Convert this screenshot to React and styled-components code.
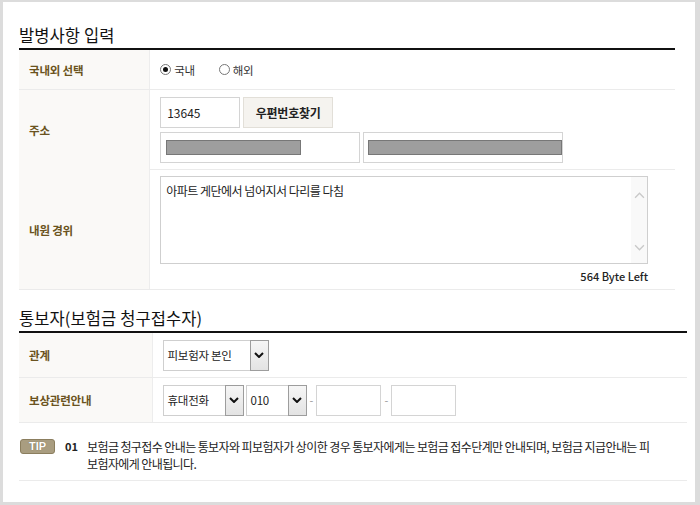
import React from "react";
import styled, { createGlobalStyle } from "styled-components";

const GlobalStyle = createGlobalStyle`
  html, body {
    margin: 0;
    padding: 0;
    background: #dcdcdc;
  }
  body {
    font-family: "Noto Sans CJK KR", "Noto Sans", sans-serif;
    color: #222;
  }
`;

const Frame = styled.div`
  width: 692px;
  height: 500px;
  margin: 2px 0 0 3px;
  padding-left: 16px;
  box-sizing: border-box;
  background: #fff;
  overflow: hidden;
`;

const Section = styled.section`
  width: ${(p) => p.$width}px;
`;

const Title = styled.h2`
  margin: 0;
  padding: ${(p) => p.$top}px 0 2px;
  font-size: 16.5px;
  line-height: 22px;
  font-weight: 400;
  letter-spacing: 0.1px;
  color: #111;
  border-bottom: 2px solid #111;
`;

const Row = styled.div`
  display: grid;
  grid-template-columns: 20% 1fr;
  height: ${(p) => p.$h}px;
  box-sizing: border-box;
  border-bottom: 1px solid #ebebeb;
`;

const Label = styled.div`
  display: flex;
  align-items: center;
  padding-left: 10px;
  background: #faf9f7;
  border-right: 1px solid #ededed;
  font-size: 11.5px;
  font-weight: 700;
  letter-spacing: -0.2px;
  color: #6a5320;
`;

const Cell = styled.div`
  display: flex;
  flex-direction: ${(p) => (p.$column ? "column" : "row")};
  align-items: ${(p) => (p.$column ? "stretch" : "center")};
  gap: ${(p) => p.$gap || 0}px;
  padding: ${(p) => p.$pad || "0 10px"};
`;

const Line = styled.div`
  display: flex;
  align-items: center;
  gap: ${(p) => p.$gap || 0}px;
  margin-left: ${(p) => p.$indent || 0}px;
`;

const RadioItem = styled.label`
  display: flex;
  align-items: center;
  gap: 3px;
  margin-right: 24px;
  font-size: 11.5px;
  letter-spacing: -0.3px;
  color: #333;
`;

const RadioDot = styled.span`
  width: 11px;
  height: 11px;
  box-sizing: border-box;
  border: 1px solid #777;
  border-radius: 50%;
  display: flex;
  align-items: center;
  justify-content: center;
  &::after {
    content: "";
    width: 5px;
    height: 5px;
    border-radius: 50%;
    background: ${(p) => (p.$on ? "#111" : "transparent")};
  }
`;

const TextInput = styled.input`
  width: ${(p) => p.$w}px;
  height: 31px;
  box-sizing: border-box;
  border: 1px solid #d4d4d4;
  padding: 0 6px;
  font-family: inherit;
  font-size: 12px;
  color: #222;
  outline: none;
`;

const SearchButton = styled.button`
  width: 90px;
  height: 31px;
  margin-left: 3px;
  border: 1px solid #e2dfd8;
  background: #f5f3ef;
  font-family: inherit;
  font-size: 12px;
  font-weight: 700;
  color: #222;
  letter-spacing: -0.2px;
`;

const AddressField = styled.div`
  width: ${(p) => p.$w}px;
  height: 31px;
  box-sizing: border-box;
  border: 1px solid #d4d4d4;
  display: flex;
  align-items: center;
  padding-left: ${(p) => p.$inset}px;
`;

const Masked = styled.span`
  width: ${(p) => p.$w}px;
  height: 15px;
  box-sizing: border-box;
  background: #9e9e9e;
  border: 1px solid #777;
`;

const MemoBox = styled.div`
  height: 88px;
  box-sizing: border-box;
  border: 1px solid #cfcfcf;
  display: flex;
`;

const Memo = styled.textarea`
  flex: 1;
  border: none;
  resize: none;
  outline: none;
  padding: 6px 5px;
  font-family: inherit;
  font-size: 12px;
  line-height: 16px;
  letter-spacing: -0.5px;
  color: #222;
  overflow: hidden;
`;

const ScrollTrack = styled.div`
  width: 16px;
  background: #f9f9f9;
  display: flex;
  flex-direction: column;
  justify-content: space-between;
  align-items: center;
  padding: 15px 0 12px;
`;

const ByteLeft = styled.div`
  margin-top: 5px;
  text-align: right;
  font-size: 11px;
  line-height: 14px;
  font-weight: 500;
  color: #222;
`;

const Select = styled.div`
  width: ${(p) => p.$w}px;
  height: 31px;
  box-sizing: border-box;
  border: 1px solid #cfcfcf;
  display: flex;
  align-items: center;
  font-size: 11.5px;
  color: #222;
`;

const SelectText = styled.span`
  flex: 1;
  padding-left: 4px;
  letter-spacing: -0.3px;
`;

const SelectArrow = styled.span`
  width: 17px;
  align-self: stretch;
  margin: -1px -1px -1px 0;
  border: 1px solid #9d9d9d;
  background: linear-gradient(#f6f6f6, #e3e3e3);
  display: flex;
  align-items: center;
  justify-content: center;
`;

const Dash = styled.span`
  margin: 0 3px;
  font-size: 11px;
  color: #999;
`;

const Tip = styled.div`
  display: flex;
  align-items: flex-start;
  padding: 15px 0 8px 1px;
  border-bottom: 1px solid #ebebeb;
`;

const TipBadge = styled.span`
  width: 35px;
  height: 15px;
  box-sizing: border-box;
  margin-top: 1px;
  border: 1px solid #8b7e5e;
  border-radius: 3px;
  background: #a99d80;
  color: #fff;
  font-family: "Liberation Sans", Arial, sans-serif;
  font-size: 11px;
  font-weight: 700;
  line-height: 13px;
  text-align: center;
  text-shadow: 0 0 1px #6d6145;
`;

const TipNo = styled.span`
  width: 22px;
  margin-left: 10px;
  font-size: 11px;
  font-weight: 700;
  line-height: 17px;
`;

const TipText = styled.p`
  margin: 0;
  font-size: 12px;
  line-height: 17px;
  letter-spacing: -0.6px;
  color: #222;
`;

const Chevron = ({ up, color = "#111", w = 10, h = 6, sw = 2 }) => (
  <svg width={w} height={h} viewBox="0 0 10 6">
    <path
      d={up ? "M1 5 L5 1 L9 5" : "M1 1 L5 5 L9 1"}
      stroke={color}
      strokeWidth={sw}
      fill="none"
    />
  </svg>
);

function SelectBox({ w, children }) {
  return (
    <Select $w={w}>
      <SelectText>{children}</SelectText>
      <SelectArrow>
        <Chevron />
      </SelectArrow>
    </Select>
  );
}

export default function App() {
  return (
    <>
      <GlobalStyle />
      <Frame>
        <Section $width={656}>
          <Title $top={22}>발병사항 입력</Title>
          <Row $h={40}>
            <Label>국내외 선택</Label>
            <Cell>
              <RadioItem>
                <RadioDot $on />
                국내
              </RadioItem>
              <RadioItem>
                <RadioDot />
                해외
              </RadioItem>
            </Cell>
          </Row>
          <Row $h={80}>
            <Label>주소</Label>
            <Cell $column $gap={4} $pad="7px 10px">
              <Line>
                <TextInput $w={80} defaultValue="13645" readOnly />
                <SearchButton type="button">우편번호찾기</SearchButton>
              </Line>
              <Line $gap={3}>
                <AddressField $w={200} $inset={5}>
                  <Masked $w={135} />
                </AddressField>
                <AddressField $w={200} $inset={4}>
                  <Masked $w={194} />
                </AddressField>
              </Line>
            </Cell>
          </Row>
          <Row $h={120}>
            <Label>내원 경위</Label>
            <Cell $column $pad="6px 27px 0 10px">
              <MemoBox>
                <Memo defaultValue="아파트 게단에서 넘어지서 다리를 다침" readOnly />
                <ScrollTrack>
                  <Chevron up color="#c9c9c9" w={11} h={7} sw={1.2} />
                  <Chevron color="#c9c9c9" w={11} h={7} sw={1.2} />
                </ScrollTrack>
              </MemoBox>
              <ByteLeft>564 Byte Left</ByteLeft>
            </Cell>
          </Row>
        </Section>

        <Section $width={668}>
          <Title $top={17}>통보자(보험금 청구접수자)</Title>
          <Row $h={45}>
            <Label>관계</Label>
            <Cell>
              <SelectBox w={106}>피보험자 본인</SelectBox>
            </Cell>
          </Row>
          <Row $h={45}>
            <Label>보상관련안내</Label>
            <Cell>
              <SelectBox w={81}>휴대전화</SelectBox>
              <Line $indent={2}>
                <SelectBox w={61}>010</SelectBox>
              </Line>
              <Dash>-</Dash>
              <TextInput $w={65} readOnly />
              <Dash>-</Dash>
              <TextInput $w={65} readOnly />
            </Cell>
          </Row>
          <Tip>
            <TipBadge>TIP</TipBadge>
            <TipNo>01</TipNo>
            <TipText>
              보험금 청구접수 안내는 통보자와 피보험자가 상이한 경우 통보자에게는 보험금 접수단계만 안내되며, 보험금 지급안내는 피
              <br />
              보험자에게 안내됩니다.
            </TipText>
          </Tip>
        </Section>
      </Frame>
    </>
  );
}
